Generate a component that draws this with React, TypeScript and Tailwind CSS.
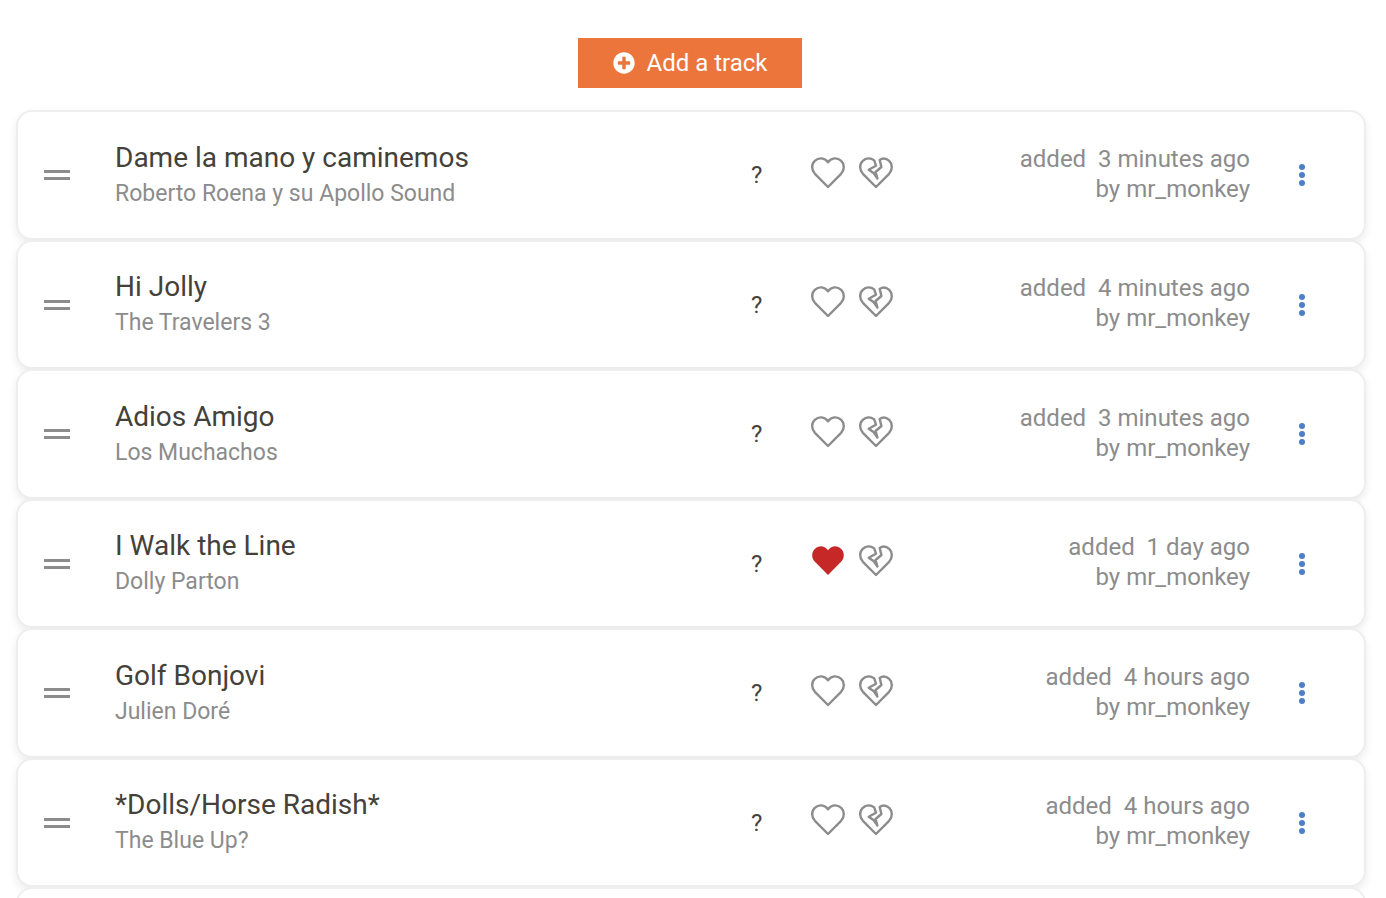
import React from "react";
import { FaPlusCircle } from "react-icons/fa";

type Track = { title: string; artist: string; added: string; liked?: boolean };

const tracks: Track[] = [
  { title: "Dame la mano y caminemos", artist: "Roberto Roena y su Apollo Sound", added: "3 minutes ago" },
  { title: "Hi Jolly", artist: "The Travelers 3", added: "4 minutes ago" },
  { title: "Adios Amigo", artist: "Los Muchachos", added: "3 minutes ago" },
  { title: "I Walk the Line", artist: "Dolly Parton", added: "1 day ago", liked: true },
  { title: "Golf Bonjovi", artist: "Julien Doré", added: "4 hours ago" },
  { title: "*Dolls/Horse Radish*", artist: "The Blue Up?", added: "4 hours ago" },
];

const heartPath =
  "M17 30 L3.9 16.8 C0.2 12.8 0.4 7 3.8 3.9 C7.8 0.2 13.4 0.5 17 5.2 C20.6 0.5 26.2 0.2 30.2 3.9 C33.6 7 33.8 12.8 30.1 16.8 Z";

function Heart({ filled }: { filled?: boolean }) {
  return (
    <svg viewBox="0 0 34 32" className="h-8 w-[34px] overflow-visible" aria-hidden="true" strokeLinejoin="round">
      {filled ? (
        <path d={heartPath} fill="#c62828" />
      ) : (
        <path d={heartPath} fill="none" stroke="#8c8c8c" strokeWidth="2.4" />
      )}
    </svg>
  );
}

function BrokenHeart() {
  return (
    <svg
      viewBox="0 0 34 32"
      className="h-8 w-[34px] overflow-visible"
      aria-hidden="true"
      fill="none"
      stroke="#8c8c8c"
      strokeWidth="2.4"
      strokeLinejoin="round"
    >
      <path d="M17 30 L3.9 16.8 C0.2 12.8 0.4 7 3.8 3.9 C7 1 11.6 0.7 15.2 3.4 L17 8.7 L9.7 12.7 L14.8 16.3 L18.4 21.5 L16.6 15 L22.4 10 L20.7 3 C23.6 0.8 27.2 1.1 30.2 3.9 C33.6 7 33.8 12.8 30.1 16.8 Z" />
    </svg>
  );
}

export default function App() {
  return (
    <main className="h-screen overflow-hidden bg-white pt-[38px] pr-5 pl-4 font-['Roboto',sans-serif] text-[#44413a]">
      <div className="mb-[22px] flex justify-center pr-0.5">
        <button className="flex h-[50px] w-56 items-center justify-center gap-3 bg-[#eb753b] text-2xl text-white">
          <FaPlusCircle className="size-[22px]" aria-hidden="true" />
          Add a track
        </button>
      </div>
      <ul>
        {tracks.map((t) => (
          <li
            key={t.title}
            className="flex h-[130px] items-center rounded-2xl border-2 border-[#eeeeee] bg-white pr-[47px] pl-[26px] shadow-[0_4px_8px_rgba(0,0,0,0.08)] even:h-[129px]"
          >
            <button aria-label="Reorder track" className="flex w-[71px] flex-col gap-1">
              <span className="h-[3px] w-[26px] bg-[#8c8c8c]" />
              <span className="h-[3px] w-[26px] bg-[#8c8c8c]" />
            </button>
            <div className="min-w-0 flex-1">
              <h2 className="text-[28px] leading-9">{t.title}</h2>
              <p className="text-[23px] leading-[35px] text-[#8c8c8c]">{t.artist}</p>
            </div>
            <span className="w-[60px] text-2xl">?</span>
            <div className="flex gap-[14px] pb-[5px]">
              <button aria-label="Like" aria-pressed={!!t.liked}>
                <Heart filled={t.liked} />
              </button>
              <button aria-label="Dislike">
                <BrokenHeart />
              </button>
            </div>
            <p className="w-[357px] pb-[3px] text-right text-2xl leading-[30px] text-[#8c8c8c]">
              added&nbsp; {t.added}
              <br />
              by mr_monkey
            </p>
            <button aria-label="Track options" className="ml-[49px] flex w-[18px] flex-col gap-[2px]">
              <span className="size-[6px] rounded-full bg-[#4a7fc9]" />
              <span className="size-[6px] rounded-full bg-[#4a7fc9]" />
              <span className="size-[6px] rounded-full bg-[#4a7fc9]" />
            </button>
          </li>
        ))}
        <li className="h-[130px] rounded-2xl border-2 border-[#eeeeee] bg-white" />
      </ul>
    </main>
  );
}
